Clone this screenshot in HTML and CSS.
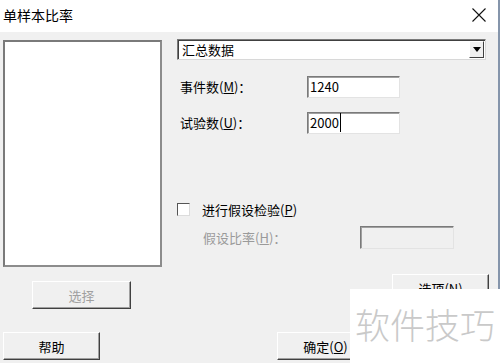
FILE: index.html
```html
<!DOCTYPE html>
<html lang="zh">
<head>
<meta charset="utf-8">
<title>单样本比率</title>
<link rel="stylesheet" href="styles.css">
</head>
<body>
<div class="window">
  <div class="titlebar">
    <span class="title">单样本比率</span>
    <svg class="close" width="14" height="14" viewBox="0 0 14 14"><path d="M0.5 0.5 L13.5 13.5 M13.5 0.5 L0.5 13.5" stroke="#111" stroke-width="1.1" fill="none"/></svg>
  </div>
  <div class="client">
    <div class="top">
      <div class="listbox"></div>
      <div class="panel">
        <div class="combo">
          <span class="combo-text">汇总数据</span>
          <span class="drop"><svg width="8" height="5" viewBox="0 0 8 5"><path d="M0 0 H8 L4 5 Z" fill="#000"/></svg></span>
        </div>
        <div class="field first">
          <span class="label">事件数(<u>M</u>)：</span>
          <span class="input">1240</span>
        </div>
        <div class="field second">
          <span class="label">试验数(<u>U</u>)：</span>
          <span class="input"><span class="caret">2000</span></span>
        </div>
        <div class="check-row">
          <span class="checkbox"></span>
          <span class="check-label">进行假设检验(<u>P</u>)</span>
        </div>
        <div class="hyp-row">
          <span class="label disabled">假设比率(<u>H</u>)：</span>
          <span class="input off"></span>
        </div>
      </div>
    </div>
    <div class="btn-row mid">
      <span class="btn disabled select">选择</span>
      <span class="btn options">选项(<u>N</u>)</span>
    </div>
    <div class="btn-row bottom">
      <span class="btn">帮助</span>
      <span class="btn ok">确定(<u>O</u>)</span>
    </div>
    <div class="watermark">软件技巧</div>
  </div>
</div>
</body>
</html>
```

FILE: styles.css
```css
html, body {
  margin: 0;
  padding: 0;
  background: #f0f0f0;
}
body {
  width: 500px;
  height: 363px;
  overflow: hidden;
  font-family: "Noto Sans CJK SC", "DejaVu Sans", sans-serif;
  font-size: 13px;
  color: #000;
}
.window {
  width: 500px;
  height: 363px;
  box-sizing: border-box;
  border-right: 2px solid #8595ab;
  display: flex;
  flex-direction: column;
}
.titlebar {
  height: 32px;
  flex: none;
  background: #fff;
  display: flex;
  align-items: center;
  justify-content: space-between;
  padding: 0 12px 0 3px;
}
.title {
  font-size: 14px;
  line-height: 20px;
  margin-top: -2px;
}
.close {
  margin-top: -2px;
}
.client {
  flex: 1;
  position: relative;
  background: #f0f0f0;
  padding: 8px 9px 0 3px;
}
.top {
  display: grid;
  grid-template-columns: 159px 309px;
  column-gap: 15px;
}
.listbox {
  height: 227px;
  box-sizing: border-box;
  background: #fff;
  border-top: 2px solid #7a7a7a;
  border-left: 2px solid #7a7a7a;
  border-right: 2px solid #8c8c8c;
  border-bottom: 2px solid #8c8c8c;
}
.panel {
  display: flex;
  flex-direction: column;
}
.combo {
  margin-top: -1px;
  height: 21px;
  box-sizing: border-box;
  background: #fff;
  border-top: 1px solid #7a7a7a;
  border-left: 1px solid #7a7a7a;
  border-right: 1px solid #d8d8d8;
  border-bottom: 1px solid #d8d8d8;
  box-shadow: inset 1px 1px 0 #404040;
  display: flex;
  align-items: center;
  justify-content: space-between;
  padding: 0 1px 0 4px;
}
.combo-text {
  font-size: 13px;
  line-height: 18px;
}
.drop {
  width: 15px;
  height: 17px;
  box-sizing: border-box;
  background: #f0f0f0;
  border-top: 1px solid #fff;
  border-left: 1px solid #fff;
  border-right: 1px solid #404040;
  border-bottom: 1px solid #404040;
  display: flex;
  align-items: center;
  justify-content: center;
}
.field {
  display: flex;
  align-items: center;
  padding-left: 3px;
}
.field.first { margin-top: 16px; }
.field.second { margin-top: 14px; }
.label {
  width: 127px;
  flex: none;
  font-size: 13px;
  line-height: 22px;
}
.label.disabled {
  color: #9a9a9a;
  width: 157px;
}
.input {
  width: 93px;
  height: 22px;
  box-sizing: border-box;
  background: #fff;
  border-top: 1px solid #7a7a7a;
  border-left: 1px solid #7a7a7a;
  border-right: 1px solid #e3e3e3;
  border-bottom: 1px solid #e3e3e3;
  box-shadow: inset 1px 1px 0 #a0a0a0;
  padding-left: 2px;
  font-size: 13px;
  line-height: 20px;
}
.input.off {
  width: 94px;
  height: 23px;
  background: #f0f0f0;
}
.caret {
  border-right: 1px solid #000;
  padding-right: 1px;
}
.check-row {
  margin-top: 68px;
  display: flex;
  align-items: center;
  height: 15px;
}
.checkbox {
  width: 13px;
  height: 13px;
  box-sizing: border-box;
  background: #fff;
  border-top: 1px solid #555;
  border-left: 1px solid #555;
  border-right: 1px solid #dcdcdc;
  border-bottom: 1px solid #dcdcdc;
  margin-right: 12px;
}
.check-label {
  font-size: 13px;
  line-height: 15px;
}
.hyp-row {
  margin-top: 9px;
  display: flex;
  align-items: center;
  padding-left: 26px;
}
.btn-row {
  display: flex;
  align-items: center;
}
.btn-row.mid { margin-top: 14px; }
.btn-row.bottom { margin-top: 23px; }
.btn {
  width: 97px;
  height: 28px;
  box-sizing: border-box;
  background: #f0f0f0;
  border-top: 1px solid #fff;
  border-left: 1px solid #fff;
  border-right: 1px solid #404040;
  border-bottom: 1px solid #404040;
  box-shadow: inset -1px -1px 0 #a0a0a0;
  display: flex;
  align-items: center;
  justify-content: center;
  font-size: 13px;
}
.btn.disabled { color: #a0a0a0; }
.btn.select {
  width: 99px;
  margin-left: 29px;
}
.btn.options {
  margin-left: auto;
  margin-top: -14px;
}
.btn.ok { margin-left: 177px; }
.watermark {
  position: absolute;
  left: 350px;
  top: 257px;
  width: 150px;
  height: 74px;
  background: #fff;
  color: #c9c9c9;
  font-size: 35px;
  font-weight: 300;
  line-height: 70px;
  padding-left: 5px;
  box-sizing: border-box;
  white-space: nowrap;
}
```
